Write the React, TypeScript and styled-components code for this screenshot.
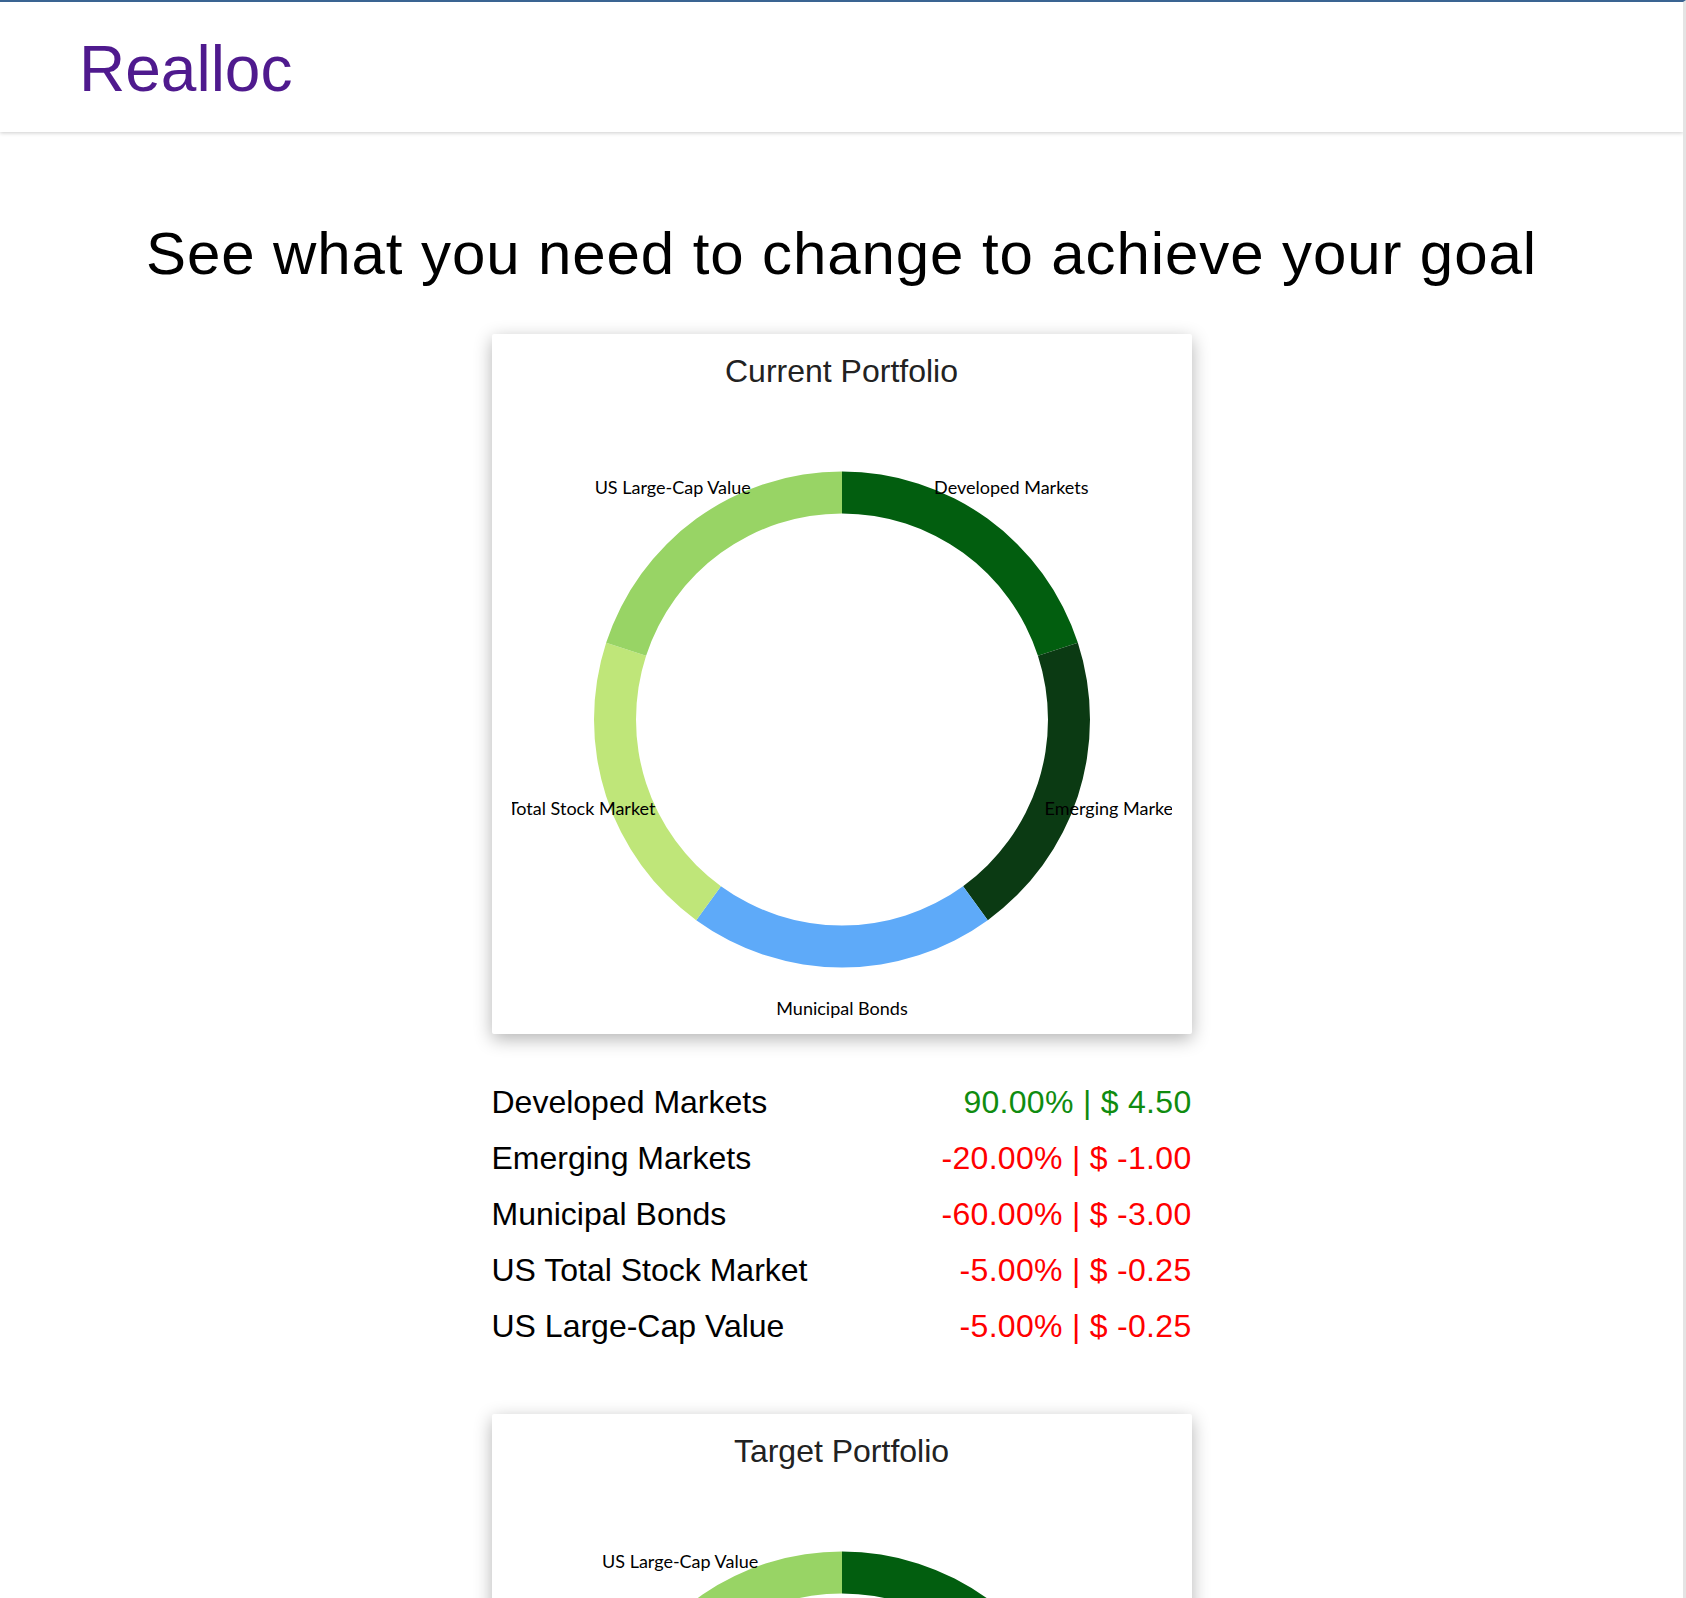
import React from 'react';
import styled, { createGlobalStyle } from 'styled-components';

const GlobalStyle = createGlobalStyle`
  html, body {
    margin: 0;
    padding: 0;
    background: #ffffff;
  }
  body {
    font-family: 'Liberation Sans', Arial, Helvetica, sans-serif;
    border-top: 2px solid #3a6492;
    border-right: 3px solid #e4e4e4;
    min-height: 100vh;
    box-sizing: border-box;
  }
`;

const Header = styled.header`
  position: relative;
  z-index: 1;
  height: 130px;
  box-sizing: border-box;
  padding: 35px 0 0 79px;
  background: #ffffff;
  box-shadow: 0 1px 4px rgba(0, 0, 0, 0.2);
`;

const Logo = styled.div`
  font-size: 64px;
  line-height: 1;
  color: #4f1a8e;
`;

const Main = styled.main`
  display: flex;
  flex-direction: column;
  align-items: center;
`;

const Heading = styled.h1`
  margin: 87px 0 0;
  font-size: 60px;
  font-weight: normal;
  line-height: 1.18;
  letter-spacing: 0.9px;
  color: #000000;
  text-align: center;
`;

const Card = styled.section<{ $gap: number }>`
  width: 700px;
  height: 700px;
  box-sizing: border-box;
  margin-top: ${(p) => p.$gap}px;
  padding: 18px 20px 0;
  background: #ffffff;
  border-radius: 2px;
  box-shadow: 0 5px 18px rgba(0, 0, 0, 0.3);
`;

const CardTitle = styled.div`
  font-size: 32px;
  line-height: 38px;
  color: #222222;
  text-align: center;
`;

const ChartSvg = styled.svg`
  display: block;
  overflow: hidden;
`;

const SliceLabel = styled.text`
  font-family: 'Gill Sans', Lato, 'Noto Sans', sans-serif;
  font-size: 18px;
  fill: #000000;
`;

const Legend = styled.div`
  width: 700px;
  margin-top: 40px;
`;

const LegendRow = styled.div`
  display: flex;
  justify-content: space-between;
  font-size: 32px;
  line-height: 56px;
  color: #000000;
`;

const Delta = styled.span<{ $up: boolean }>`
  color: ${(p) => (p.$up ? '#108c10' : '#ff0000')};
  letter-spacing: 0.3px;
`;

type Slice = { name: string; share: number; color: string };

const current: Slice[] = [
  { name: 'Developed Markets', share: 20, color: '#025e0f' },
  { name: 'Emerging Markets', share: 20, color: '#0b3a13' },
  { name: 'Municipal Bonds', share: 20, color: '#5eaaf9' },
  { name: 'US Total Stock Market', share: 20, color: '#bfe679' },
  { name: 'US Large-Cap Value', share: 20, color: '#98d465' },
];

const target: Slice[] = [
  { name: 'Developed Markets', share: 40, color: '#025e0f' },
  { name: 'Emerging Markets', share: 15, color: '#0b3a13' },
  { name: 'Municipal Bonds', share: 15, color: '#5eaaf9' },
  { name: 'US Total Stock Market', share: 11, color: '#bfe679' },
  { name: 'US Large-Cap Value', share: 19, color: '#98d465' },
];

const changes = [
  { name: 'Developed Markets', pct: '90.00%', usd: '4.50', up: true },
  { name: 'Emerging Markets', pct: '-20.00%', usd: '-1.00', up: false },
  { name: 'Municipal Bonds', pct: '-60.00%', usd: '-3.00', up: false },
  { name: 'US Total Stock Market', pct: '-5.00%', usd: '-0.25', up: false },
  { name: 'US Large-Cap Value', pct: '-5.00%', usd: '-0.25', up: false },
];

const W = 660;
const H = 644;
const CX = 330;
const CY = 329.5;
const OUTER = 248;
const INNER = 206;
const LABEL_R = 288;

const pt = (r: number, deg: number) => {
  const a = (deg * Math.PI) / 180;
  return [CX + r * Math.sin(a), CY - r * Math.cos(a)];
};

const arcPath = (a0: number, a1: number) => {
  const large = a1 - a0 > 180 ? 1 : 0;
  const [ox0, oy0] = pt(OUTER, a0);
  const [ox1, oy1] = pt(OUTER, a1);
  const [ix1, iy1] = pt(INNER, a1);
  const [ix0, iy0] = pt(INNER, a0);
  return `M${ox0} ${oy0} A${OUTER} ${OUTER} 0 ${large} 1 ${ox1} ${oy1} L${ix1} ${iy1} A${INNER} ${INNER} 0 ${large} 0 ${ix0} ${iy0} Z`;
};

const Donut = ({ slices }: { slices: Slice[] }) => {
  let start = 0;
  const parts = slices.map((s) => {
    const sweep = (s.share / 100) * 360;
    const a0 = start;
    const a1 = start + sweep;
    start = a1;
    const [lx, ly] = pt(LABEL_R, (a0 + a1) / 2);
    return { ...s, d: arcPath(a0, a1), lx, ly };
  });
  return (
    <ChartSvg width={W} height={H} viewBox={`0 0 ${W} ${H}`}>
      {parts.map((p) => (
        <path key={p.name} d={p.d} fill={p.color} />
      ))}
      {parts.map((p) => (
        <SliceLabel key={p.name} x={p.lx} y={p.ly} textAnchor="middle" dominantBaseline="central">
          {p.name}
        </SliceLabel>
      ))}
    </ChartSvg>
  );
};

const App = () => {
  return (
    <>
      <GlobalStyle />
      <Header>
        <Logo>Realloc</Logo>
      </Header>
      <Main>
        <Heading>See what you need to change to achieve your goal</Heading>
        <Card $gap={44}>
          <CardTitle>Current Portfolio</CardTitle>
          <Donut slices={current} />
        </Card>
        <Legend>
          {changes.map((c) => (
            <LegendRow key={c.name}>
              <span>{c.name}</span>
              <Delta $up={c.up}>
                {c.pct} | $ {c.usd}
              </Delta>
            </LegendRow>
          ))}
        </Legend>
        <Card $gap={60}>
          <CardTitle>Target Portfolio</CardTitle>
          <Donut slices={target} />
        </Card>
      </Main>
    </>
  );
};

export default App;
